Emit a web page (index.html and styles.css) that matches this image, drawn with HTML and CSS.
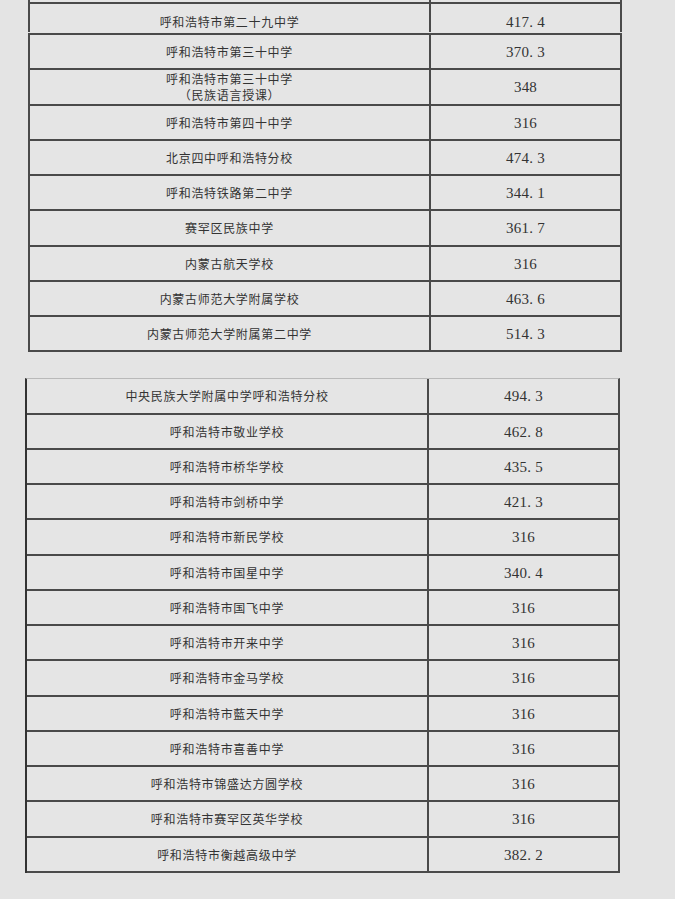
FILE: index.html
```html
<!DOCTYPE html>
<html lang="zh-CN">
<head>
<meta charset="utf-8">
<title>呼和浩特市学校分数线</title>
<link rel="stylesheet" href="styles.css">
</head>
<body>
<div class="page">
  <div class="frag-top">
    <div class="tbl tbl-a">
      <div class="cell name sliver"></div>
      <div class="cell score sliver"></div>
      <div class="cell name">呼和浩特市第二十九中学</div>
      <div class="cell score">417<span class="dot">.</span>4</div>
    </div>
  </div>

  <div class="tbl tbl-b">
    <div class="cell name">呼和浩特市第三十中学</div>
    <div class="cell score">370<span class="dot">.</span>3</div>
    <div class="cell name two">呼和浩特市第三十中学<br>（民族语言授课）</div>
    <div class="cell score">348</div>
    <div class="cell name">呼和浩特市第四十中学</div>
    <div class="cell score">316</div>
    <div class="cell name">北京四中呼和浩特分校</div>
    <div class="cell score">474<span class="dot">.</span>3</div>
    <div class="cell name">呼和浩特铁路第二中学</div>
    <div class="cell score">344<span class="dot">.</span>1</div>
    <div class="cell name">赛罕区民族中学</div>
    <div class="cell score">361<span class="dot">.</span>7</div>
    <div class="cell name">内蒙古航天学校</div>
    <div class="cell score">316</div>
    <div class="cell name">内蒙古师范大学附属学校</div>
    <div class="cell score">463<span class="dot">.</span>6</div>
    <div class="cell name">内蒙古师范大学附属第二中学</div>
    <div class="cell score">514<span class="dot">.</span>3</div>
  </div>

  <div class="tbl tbl-c">
    <div class="cell name">中央民族大学附属中学呼和浩特分校</div>
    <div class="cell score">494<span class="dot">.</span>3</div>
    <div class="cell name">呼和浩特市敬业学校</div>
    <div class="cell score">462<span class="dot">.</span>8</div>
    <div class="cell name">呼和浩特市桥华学校</div>
    <div class="cell score">435<span class="dot">.</span>5</div>
    <div class="cell name">呼和浩特市剑桥中学</div>
    <div class="cell score">421<span class="dot">.</span>3</div>
    <div class="cell name">呼和浩特市新民学校</div>
    <div class="cell score">316</div>
    <div class="cell name">呼和浩特市国星中学</div>
    <div class="cell score">340<span class="dot">.</span>4</div>
    <div class="cell name">呼和浩特市国飞中学</div>
    <div class="cell score">316</div>
    <div class="cell name">呼和浩特市开来中学</div>
    <div class="cell score">316</div>
    <div class="cell name">呼和浩特市金马学校</div>
    <div class="cell score">316</div>
    <div class="cell name">呼和浩特市藍天中学</div>
    <div class="cell score">316</div>
    <div class="cell name">呼和浩特市喜善中学</div>
    <div class="cell score">316</div>
    <div class="cell name">呼和浩特市锦盛达方圆学校</div>
    <div class="cell score">316</div>
    <div class="cell name">呼和浩特市赛罕区英华学校</div>
    <div class="cell score">316</div>
    <div class="cell name">呼和浩特市衡越高级中学</div>
    <div class="cell score">382<span class="dot">.</span>2</div>
  </div>
</div>
</body>
</html>
```

FILE: styles.css
```css
html, body {
  margin: 0;
  padding: 0;
  background: #e4e4e4;
}

body {
  font-family: "Noto Sans CJK SC", "Noto Sans", sans-serif;
  color: #333333;
}

.page {
  display: flex;
  flex-direction: column;
  width: 675px;
  height: 899px;
  overflow: hidden;
}

.tbl {
  display: grid;
  grid-auto-rows: 35.25px;
  box-sizing: border-box;
  border-left: 2px solid #4a4a4a;
  border-right: 2px solid #4a4a4a;
  background: #e5e5e5;
}

.cell {
  display: flex;
  align-items: center;
  justify-content: center;
  box-sizing: border-box;
  border-bottom: 2px solid #4a4a4a;
  text-align: center;
}

.cell.name {
  border-right: 2px solid #4a4a4a;
  font-size: 12px;
  letter-spacing: 0.7px;
  line-height: 16px;
  padding-top: 1px;
}

.cell.score {
  font-family: "Liberation Serif", "Noto Sans CJK SC", serif;
  font-size: 15px;
  letter-spacing: 0.2px;
  padding-top: 2px;
}

.dot {
  margin-right: 4px;
}

.frag-top {
  margin-left: 28px;
  width: 594px;
  height: 32px;
  overflow: hidden;
  flex: none;
}

.tbl-a {
  grid-template-columns: 401px 1fr;
  grid-template-rows: 4px 38px;
}

.tbl-a .cell {
  border-bottom: none;
  padding-bottom: 4px;
}

.tbl-a .cell.sliver {
  border-bottom: 2px solid #4a4a4a;
  padding: 0;
}

.tbl-b {
  grid-template-columns: 401px 1fr;
  margin-left: 28px;
  width: 594px;
  margin-top: 1px;
  border-top: 2px solid #4a4a4a;
  flex: none;
}

.tbl-c {
  grid-template-columns: 402px 1fr;
  margin-left: 25px;
  width: 595px;
  margin-top: 26px;
  border-top: 1px solid #b9b9b9;
  border-left-color: #333333;
  flex: none;
}
```
